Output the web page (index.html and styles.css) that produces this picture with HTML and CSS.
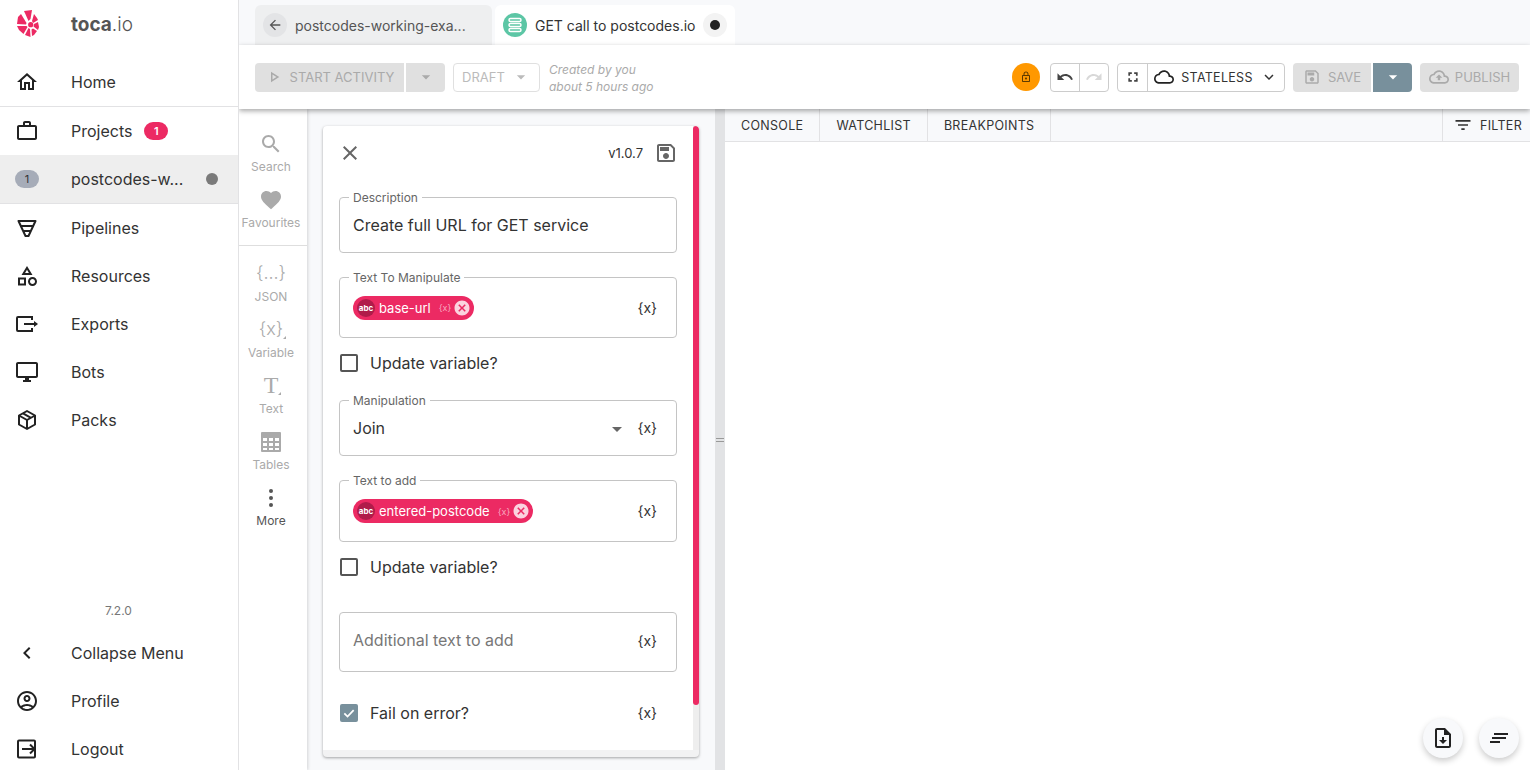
FILE: index.html
```html
<!DOCTYPE html>
<html lang="en">
<head>
    <meta charset="UTF-8">
    <title>toca.io</title>
    <link rel="stylesheet" href="styles.css">
</head>
<body>
    <div class="app">
        <aside class="sidebar">
            <div class="brand">
                <svg class="logo" width="22" height="27" viewBox="0 0 22 27" fill="#ec2a63">
                    <path d="M7 1 L15 0 L13.500 9 L11.500 11 Z"/>
                    <path d="M17 4 L20 8 L21 10 L16 13 L15 11 Z"/>
                    <path d="M21 12 L22 17 L21 20 L16.500 16.500 L17 14 Z"/>
                    <path d="M20 21 L17 25 L15 26 L14.500 19.500 L16 18.500 Z"/>
                    <path d="M13.500 27 L8 25 L11.500 18 L13 19 Z"/>
                    <path d="M6.500 24 L2 20 L0 16 L9.500 16 L10.500 17 Z"/>
                    <path d="M0 14 L1 7 L4 4 L9.500 13 L9 14.500 Z"/>
                    <circle cx="13.700" cy="14.700" r="2.600"/>
                </svg>
                <span class="brand-name"><b>toca</b>.io</span>
            </div>
            <nav class="nav">
                <a class="nav-item nav-home">
                    <svg class="nav-icon" viewBox="0 0 24 24"><path d="M12 5.690l5 4.500V18h-2v-6H9v6H7v-7.810l5-4.500M12 3L2 12h3v8h6v-6h2v6h6v-8h3L12 3z"/></svg>
                    <span>Home</span>
                </a>
                <a class="nav-item">
                    <svg class="nav-icon" viewBox="0 0 24 24"><path d="M14 6V4h-4v2h4zM4 8v11h16V8H4zm16-2c1.110 0 2 .890 2 2v11c0 1.110-.890 2-2 2H4c-1.110 0-2-.890-2-2l.010-11c0-1.110.880-2 1.990-2h4V4c0-1.110.890-2 2-2h4c1.110 0 2 .890 2 2v2h4z"/></svg>
                    <span>Projects</span>
                    <span class="count-badge">1</span>
                </a>
                <a class="nav-item nav-active">
                    <span class="grey-badge">1</span>
                    <span>postcodes-w...</span>
                    <span class="status-dot"></span>
                </a>
                <a class="nav-item">
                    <svg class="nav-icon nav-stroke" viewBox="0 0 24 24"><path d="M3.500 5h17L13.500 20h-3z" stroke-linejoin="round"/><path d="M5 10h14M8 15h8"/></svg>
                    <span>Pipelines</span>
                </a>
                <a class="nav-item">
                    <svg class="nav-icon" viewBox="0 0 24 24"><path d="M12 2l-5.500 9h11L12 2zm0 3.840L13.930 9h-3.870L12 5.840zM17.500 13c-2.490 0-4.500 2.010-4.500 4.500s2.010 4.500 4.500 4.500 4.500-2.010 4.500-4.500-2.010-4.500-4.500-4.500zm0 7c-1.380 0-2.500-1.120-2.500-2.500s1.120-2.500 2.500-2.500 2.500 1.120 2.500 2.500-1.120 2.500-2.500 2.500zM3 21.500h8v-8H3v8zm2-6h4v4H5v-4z"/></svg>
                    <span>Resources</span>
                </a>
                <a class="nav-item">
                    <svg class="nav-icon nav-stroke" viewBox="0 0 24 24"><path d="M17 8V5H3a1 1 0 0 0-1 1v12a1 1 0 0 0 1 1h14v-3"/><path d="M9 12h11"/><path d="M19 9l4 3-4 3z" fill="#222" stroke="none"/></svg>
                    <span>Exports</span>
                </a>
                <a class="nav-item">
                    <svg class="nav-icon" viewBox="0 0 24 24"><path d="M21 2H3c-1.100 0-2 .900-2 2v12c0 1.100.900 2 2 2h7v2H8v2h8v-2h-2v-2h7c1.100 0 2-.900 2-2V4c0-1.100-.900-2-2-2zm0 14H3V4h18v12z"/></svg>
                    <span>Bots</span>
                </a>
                <a class="nav-item">
                    <svg class="nav-icon nav-stroke" viewBox="0 0 24 24" stroke-linejoin="round"><path d="M12 3l8 4.500v9L12 21l-8-4.500v-9z"/><path d="M4 7.500l8 4.500 8-4.500M12 12v9M8 5.300l8 4.500"/></svg>
                    <span>Packs</span>
                </a>
            </nav>
            <div class="sidebar-foot">
                <div class="version">7.2.0</div>
                <a class="nav-item">
                    <svg class="nav-icon" viewBox="0 0 24 24"><path d="M15.410 7.410L14 6l-6 6 6 6 1.410-1.410L10.830 12z"/></svg>
                    <span>Collapse Menu</span>
                </a>
                <a class="nav-item">
                    <svg class="nav-icon" viewBox="0 0 24 24"><path d="M12 2C6.480 2 2 6.480 2 12s4.480 10 10 10 10-4.480 10-10S17.520 2 12 2zM7.350 18.500C8.660 17.560 10.260 17 12 17s3.340.560 4.650 1.500C15.340 19.440 13.740 20 12 20s-3.340-.560-4.650-1.500zm10.790-1.380C16.450 15.800 14.320 15 12 15s-4.450.800-6.140 2.120C4.700 15.730 4 13.950 4 12c0-4.420 3.580-8 8-8s8 3.580 8 8c0 1.950-.700 3.730-1.860 5.120zM12 6c-1.930 0-3.500 1.570-3.500 3.500S10.070 13 12 13s3.500-1.570 3.500-3.500S13.930 6 12 6zm0 5c-.830 0-1.500-.670-1.500-1.500S11.170 8 12 8s1.500.670 1.500 1.500S12.830 11 12 11z"/></svg>
                    <span>Profile</span>
                </a>
                <a class="nav-item">
                    <svg class="nav-icon nav-stroke" viewBox="0 0 24 24"><path d="M4 3.500h15a1 1 0 0 1 1 1v15a1 1 0 0 1-1 1H4a1 1 0 0 1-1-1v-15a1 1 0 0 1 1-1z"/><path d="M7 12h13M15 7.500l4.500 4.500-4.500 4.500"/></svg>
                    <span>Logout</span>
                </a>
            </div>
        </aside>

        <main class="main">
            <div class="tabs">
                <div class="tab tab-back">
                    <span class="tab-circle">
                        <svg width="16" height="16" viewBox="0 0 24 24" fill="#555"><path d="M20 11H7.830l5.590-5.590L12 4l-8 8 8 8 1.410-1.410L7.830 13H20v-2z"/></svg>
                    </span>
                    <span>postcodes-working-exa...</span>
                </div>
                <div class="tab tab-current">
                    <span class="tab-circle tab-green">
                        <svg width="18" height="18" viewBox="0 0 18 18" fill="none" stroke="#fff" stroke-width="1.500"><rect x="3" y="2.500" width="12" height="3" rx="1.500"/><rect x="3" y="7.500" width="12" height="3" rx="1.500"/><rect x="3" y="12.500" width="12" height="3" rx="1.500"/></svg>
                    </span>
                    <span>GET call to postcodes.io</span>
                    <span class="tab-circle tab-dot"><i></i></span>
                </div>
            </div>

            <div class="toolbar">
                <div class="btn btn-disabled btn-start">
                    <svg width="18" height="18" viewBox="0 0 24 24" fill="#aaa"><path d="M10 8.640L15.270 12 10 15.360V8.640M8 5v14l11-7L8 5z"/></svg>
                    START ACTIVITY
                </div>
                <div class="btn btn-disabled btn-start-drop">
                    <svg width="20" height="20" viewBox="0 0 24 24" fill="#aaa"><path d="M7 10l5 5 5-5z"/></svg>
                </div>
                <div class="btn btn-draft">
                    DRAFT
                    <svg width="20" height="20" viewBox="0 0 24 24" fill="#bbb"><path d="M7 10l5 5 5-5z"/></svg>
                </div>
                <div class="created">Created by you<br>about 5 hours ago</div>

                <div class="toolbar-right">
                    <span class="lock">
                        <svg width="12" height="12" viewBox="0 0 24 24" fill="#5d3a00"><path d="M18 8h-1V6c0-2.760-2.240-5-5-5S7 3.240 7 6v2H6c-1.100 0-2 .900-2 2v10c0 1.100.900 2 2 2h12c1.100 0 2-.900 2-2V10c0-1.100-.900-2-2-2zM9 6c0-1.660 1.340-3 3-3s3 1.340 3 3v2H9V6zm9 14H6V10h12v10zm-6-3c1.100 0 2-.900 2-2s-.900-2-2-2-2 .900-2 2 .900 2 2 2z"/></svg>
                    </span>
                    <div class="btn-group">
                        <span class="group-cell group-undo">
                            <svg width="18" height="18" viewBox="0 0 24 24" fill="#444"><path d="M12.500 8c-2.650 0-5.050.990-6.900 2.600L2 7v9h9l-3.620-3.620c1.390-1.160 3.160-1.880 5.120-1.880 3.540 0 6.550 2.310 7.600 5.500l2.370-.780C21.080 11.030 17.150 8 12.500 8z"/></svg>
                        </span>
                        <span class="group-cell">
                            <svg width="18" height="18" viewBox="0 0 24 24" fill="#d8d8d8"><path d="M18.400 10.600C16.550 8.990 14.150 8 11.500 8c-4.650 0-8.580 3.030-9.960 7.220L3.900 16c1.050-3.190 4.050-5.500 7.600-5.500 1.950 0 3.730.720 5.120 1.880L13 16h9V7l-3.600 3.600z"/></svg>
                        </span>
                    </div>
                    <div class="btn-group">
                        <span class="group-cell">
                            <svg width="14" height="14" viewBox="0 0 24 24" fill="#444"><path d="M7 14H4v6h6v-3H7v-3zm-3-4h3V7h3V4H4v6zm13 7h-3v3h6v-6h-3v3zM14 4v3h3v3h3V4h-6z"/></svg>
                        </span>
                        <span class="group-cell group-wide">
                            <svg width="20" height="20" viewBox="0 0 24 24" fill="#222"><path d="M19.350 10.040C18.670 6.590 15.640 4 12 4 9.110 4 6.600 5.640 5.350 8.040 2.340 8.360 0 10.910 0 14c0 3.310 2.690 6 6 6h13c2.760 0 5-2.240 5-5 0-2.640-2.050-4.780-4.650-4.960zM19 18H6c-2.210 0-4-1.790-4-4s1.790-4 4-4h.710C7.370 7.690 9.480 6 12 6c3.040 0 5.500 2.460 5.500 5.500v.500H19c1.660 0 3 1.340 3 3s-1.340 3-3 3z"/></svg>
                            STATELESS
                            <svg width="18" height="18" viewBox="0 0 24 24" fill="#333"><path d="M16.590 8.590L12 13.170 7.410 8.590 6 10l6 6 6-6z"/></svg>
                        </span>
                    </div>
                    <div class="save-group">
                        <div class="btn btn-disabled btn-save">
                            <svg width="18" height="18" viewBox="0 0 24 24" fill="#aaa"><path d="M17 3H5c-1.110 0-2 .900-2 2v14c0 1.100.890 2 2 2h14c1.100 0 2-.900 2-2V7l-4-4zm2 16H5V5h11.170L19 7.830V19zm-7-7c-1.660 0-3 1.340-3 3s1.340 3 3 3 3-1.340 3-3-1.340-3-3-3zM6 6h9v4H6z"/></svg>
                            SAVE
                        </div>
                        <div class="btn btn-save-drop">
                            <svg width="20" height="20" viewBox="0 0 24 24" fill="#fff"><path d="M7 10l5 5 5-5z"/></svg>
                        </div>
                    </div>
                    <div class="btn btn-disabled btn-publish">
                        <svg width="20" height="20" viewBox="0 0 24 24" fill="#aaa"><path d="M19.350 10.040C18.670 6.590 15.640 4 12 4 9.110 4 6.600 5.640 5.350 8.040 2.340 8.360 0 10.910 0 14c0 3.310 2.690 6 6 6h13c2.760 0 5-2.240 5-5 0-2.640-2.050-4.780-4.650-4.960zM19 18H6c-2.210 0-4-1.790-4-4s1.790-4 4-4h.710C7.370 7.690 9.480 6 12 6c3.040 0 5.500 2.460 5.500 5.500v.500H19c1.660 0 3 1.340 3 3s-1.340 3-3 3zM8 13h2.550v3h2.900v-3H16l-4-4z"/></svg>
                        PUBLISH
                    </div>
                </div>
            </div>

            <div class="workspace">
                <div class="palette">
                    <div class="palette-item">
                        <svg width="24" height="24" viewBox="0 0 24 24" fill="#aaa"><path d="M15.500 14h-.790l-.280-.270C15.410 12.590 16 11.110 16 9.500 16 5.910 13.090 3 9.500 3S3 5.910 3 9.500 5.910 16 9.500 16c1.610 0 3.090-.590 4.230-1.570l.270.280v.790l5 4.990L20.490 19l-4.990-5zm-6 0C7.010 14 5 11.990 5 9.500S7.010 5 9.500 5 14 7.010 14 9.500 11.990 14 9.500 14z"/></svg>
                        <span>Search</span>
                    </div>
                    <div class="palette-item">
                        <svg width="24" height="24" viewBox="0 0 24 24" fill="#aaa"><path d="M12 21.350l-1.450-1.320C5.400 15.360 2 12.280 2 8.500 2 5.420 4.420 3 7.500 3c1.740 0 3.410.810 4.500 2.090C13.090 3.810 14.760 3 16.500 3 19.580 3 22 5.420 22 8.500c0 3.780-3.400 6.860-8.550 11.540L12 21.350z"/></svg>
                        <span>Favourites</span>
                    </div>
                    <div class="palette-sep"></div>
                    <div class="palette-item">
                        <b class="palette-glyph">{...}</b>
                        <span>JSON</span>
                    </div>
                    <div class="palette-item">
                        <b class="palette-glyph palette-corner">{x}</b>
                        <span>Variable</span>
                    </div>
                    <div class="palette-item">
                        <b class="palette-glyph palette-t palette-corner">T</b>
                        <span>Text</span>
                    </div>
                    <div class="palette-item">
                        <svg width="24" height="24" viewBox="0 0 24 24" fill="#aaa"><path fill-rule="evenodd" d="M3 2h18a1 1 0 0 1 1 1v18a1 1 0 0 1-1 1H3a1 1 0 0 1-1-1V3a1 1 0 0 1 1-1zM4 8v3h4V8zm6 0v3h4V8zm6 0v3h4V8zM4 13v3h4v-3zm6 0v3h4v-3zm6 0v3h4v-3zM4 18v2h4v-2zm6 0v2h4v-2zm6 0v2h4v-2z"/></svg>
                        <span>Tables</span>
                    </div>
                    <div class="palette-item palette-more">
                        <svg width="24" height="24" viewBox="0 0 24 24" fill="#555"><circle cx="12" cy="5" r="2"/><circle cx="12" cy="12" r="2"/><circle cx="12" cy="19" r="2"/></svg>
                        <span>More</span>
                    </div>
                </div>

                <div class="editor">
                    <div class="card">
                        <div class="card-body">
                            <div class="card-head">
                                <svg class="card-close" width="24" height="24" viewBox="0 0 24 24" fill="#666"><path d="M19 6.410L17.590 5 12 10.590 6.410 5 5 6.410 10.590 12 5 17.590 6.410 19 12 13.410 17.590 19 19 17.590 13.410 12z"/></svg>
                                <span class="card-version">v1.0.7</span>
                                <svg width="24" height="24" viewBox="0 0 24 24" fill="#666"><path d="M17 3H5c-1.110 0-2 .900-2 2v14c0 1.100.890 2 2 2h14c1.100 0 2-.900 2-2V7l-4-4zm2 16H5V5h11.170L19 7.830V19zm-7-7c-1.660 0-3 1.340-3 3s1.340 3 3 3 3-1.340 3-3-1.340-3-3-3zM6 6h9v4H6z"/></svg>
                            </div>

                            <fieldset class="field field-description">
                                <legend>Description</legend>
                                <span class="field-value">Create full URL for GET service</span>
                            </fieldset>

                            <fieldset class="field field-manipulate">
                                <legend>Text To Manipulate</legend>
                                <span class="chip">
                                    <span class="chip-avatar">abc</span>
                                    <span>base-url</span>
                                    <span class="chip-x">{x}</span>
                                    <svg width="18" height="18" viewBox="0 0 24 24" fill="#fbd3df"><path d="M12 2C6.470 2 2 6.470 2 12s4.470 10 10 10 10-4.470 10-10S17.530 2 12 2zm5 13.590L15.590 17 12 13.410 8.410 17 7 15.590 10.590 12 7 8.410 8.410 7 12 10.590 15.590 7 17 8.410 13.410 12 17 15.590z"/></svg>
                                </span>
                                <span class="var-toggle">{x}</span>
                            </fieldset>

                            <div class="check-row">
                                <span class="checkbox"></span>
                                <span>Update variable?</span>
                            </div>

                            <fieldset class="field field-select">
                                <legend>Manipulation</legend>
                                <span class="field-value">Join</span>
                                <svg class="select-arrow" width="24" height="24" viewBox="0 0 24 24" fill="#666"><path d="M7 10l5 5 5-5z"/></svg>
                                <span class="var-toggle">{x}</span>
                            </fieldset>

                            <fieldset class="field field-add">
                                <legend>Text to add</legend>
                                <span class="chip">
                                    <span class="chip-avatar">abc</span>
                                    <span>entered-postcode</span>
                                    <span class="chip-x">{x}</span>
                                    <svg width="18" height="18" viewBox="0 0 24 24" fill="#fbd3df"><path d="M12 2C6.470 2 2 6.470 2 12s4.470 10 10 10 10-4.470 10-10S17.530 2 12 2zm5 13.590L15.590 17 12 13.410 8.410 17 7 15.590 10.590 12 7 8.410 8.410 7 12 10.590 15.590 7 17 8.410 13.410 12 17 15.590z"/></svg>
                                </span>
                                <span class="var-toggle">{x}</span>
                            </fieldset>

                            <div class="check-row">
                                <span class="checkbox"></span>
                                <span>Update variable?</span>
                            </div>

                            <div class="field field-plain">
                                <span class="field-placeholder">Additional text to add</span>
                                <span class="var-toggle">{x}</span>
                            </div>

                            <div class="check-row check-fail">
                                <span class="checkbox checkbox-on">
                                    <svg width="14" height="14" viewBox="0 0 24 24" fill="none" stroke="#fff" stroke-width="3"><path d="M4 12.500l5.500 5.500L20 7"/></svg>
                                </span>
                                <span>Fail on error?</span>
                                <span class="var-toggle">{x}</span>
                            </div>
                        </div>
                        <div class="card-scroll"><div class="card-thumb"></div></div>
                    </div>
                </div>

                <div class="divider"><i></i><i></i></div>

                <div class="console">
                    <div class="console-tabs">
                        <span class="console-tab">CONSOLE</span>
                        <span class="console-tab">WATCHLIST</span>
                        <span class="console-tab">BREAKPOINTS</span>
                        <span class="console-filter">
                            <svg width="20" height="20" viewBox="0 0 24 24" fill="#333"><path d="M10 18h4v-2h-4v2zM3 6v2h18V6H3zm3 7h12v-2H6v2z"/></svg>
                            FILTER
                        </span>
                    </div>
                    <div class="console-body">
                        <span class="fab">
                            <svg width="24" height="24" viewBox="0 0 24 24" fill="#222"><path d="M14 2H6c-1.100 0-2 .900-2 2v16c0 1.100.900 2 2 2h12c1.100 0 2-.900 2-2V8l-6-6zm4 18H6V4h7v5h5v11z"/><path d="M11 11h2v3h3l-4 4-4-4h3z"/></svg>
                        </span>
                        <span class="fab">
                            <svg width="24" height="24" viewBox="0 0 24 24" fill="none" stroke="#222" stroke-width="2"><path d="M7 8h14M5 12h14M3 16h10"/></svg>
                        </span>
                    </div>
                </div>
            </div>
        </main>
    </div>
</body>
</html>
```

FILE: styles.css
```css
* {
    box-sizing: border-box;
}

html, body {
    height: 100%;
}

body {
    margin: 0;
    overflow: hidden;
    font-family: Inter, "Liberation Sans", sans-serif;
    color: #333;
    background: #fff;
}

.app {
    display: flex;
    height: 770px;
}

/* sidebar */

.sidebar {
    position: relative;
    z-index: 3;
    width: 239px;
    flex: none;
    display: flex;
    flex-direction: column;
    background: #fff;
    border-right: 1px solid #e2e2e4;
}

.brand {
    height: 58px;
    display: flex;
    align-items: flex-start;
    padding: 10px 0 0 17px;
    gap: 32px;
}

.brand-name {
    font-size: 19px;
    line-height: 30px;
    color: #555;
    font-weight: 300;
}

.brand-name b {
    font-weight: 700;
}

.nav-item {
    height: 48px;
    display: flex;
    align-items: center;
    font-size: 16px;
    color: #333;
}

.nav-icon {
    width: 24px;
    height: 24px;
    margin: 0 32px 0 15px;
    flex: none;
    fill: #222;
}

.nav-stroke {
    fill: none;
    stroke: #222;
    stroke-width: 2;
}

.nav-home {
    height: 49px;
    border-bottom: 1px solid #e2e2e4;
}

.nav-active {
    height: 49px;
    background: #eee;
    border-bottom: 1px solid #e2e2e4;
}

.count-badge {
    width: 24px;
    height: 18px;
    margin-left: 12px;
    border-radius: 9px;
    background: #ec2a63;
    color: #fff;
    font-size: 11px;
    font-weight: 600;
    line-height: 18px;
    text-align: center;
}

.grey-badge {
    width: 24px;
    height: 18px;
    margin: 0 32px 0 15px;
    border-radius: 9px;
    background: #a6acb8;
    color: #333;
    font-size: 11px;
    line-height: 18px;
    text-align: center;
}

.status-dot {
    width: 12px;
    height: 12px;
    margin-left: auto;
    margin-right: 20px;
    border-radius: 50%;
    background: #7a7a7a;
}

.sidebar-foot {
    margin-top: auto;
    margin-bottom: -3px;
}

.version {
    height: 19px;
    padding-right: 1px;
    margin-bottom: 7px;
    text-align: center;
    font-size: 12px;
    color: #777;
}

/* main column */

.main {
    flex: 1;
    min-width: 0;
    display: flex;
    flex-direction: column;
    background: #f8f9fb;
}

.tabs {
    height: 45px;
    flex: none;
    display: flex;
    align-items: flex-end;
    gap: 3px;
    padding-left: 16px;
}

.tab {
    height: 40px;
    display: flex;
    align-items: center;
    gap: 8px;
    padding: 0 8px;
    border-radius: 6px 6px 0 0;
    font-size: 14px;
    white-space: nowrap;
}

.tab-back {
    width: 237px;
    background: #eeeff0;
    color: #555;
}

.tab-current {
    width: 240px;
    background: #fff;
    color: #333;
}

.tab-circle {
    width: 24px;
    height: 24px;
    flex: none;
    display: flex;
    align-items: center;
    justify-content: center;
    border-radius: 50%;
    background: #e3e4e6;
}

.tab-green {
    background: #5cc6a5;
}

.tab-dot {
    margin-left: auto;
    background: #f3f3f3;
}

.tab-dot i {
    width: 10px;
    height: 10px;
    border-radius: 50%;
    background: #222;
}

/* toolbar */

.toolbar {
    position: relative;
    z-index: 2;
    height: 64px;
    flex: none;
    display: flex;
    align-items: center;
    padding: 0 11px 0 16px;
    background: #fff;
    box-shadow: 0 2px 5px rgba(0, 0, 0, .35);
}

.btn {
    height: 29px;
    display: flex;
    align-items: center;
    justify-content: center;
    gap: 7px;
    border-radius: 4px;
    font-size: 13px;
}

.btn-disabled {
    background: #e0e0e0;
    color: #aaa;
}

.btn-start {
    width: 149px;
    border-radius: 4px 0 0 4px;
}

.btn-start-drop {
    width: 39px;
    margin-left: 2px;
    border-radius: 0 4px 4px 0;
}

.btn-draft {
    width: 87px;
    margin-left: 8px;
    gap: 6px;
    border: 1px solid #e0e0e0;
    color: #bbb;
}

.created {
    margin-left: 9px;
    padding-top: 1px;
    font-size: 12px;
    line-height: 17px;
    font-style: italic;
    color: #aaa;
}

.toolbar-right {
    margin-left: auto;
    display: flex;
    align-items: center;
    gap: 8px;
}

.lock {
    width: 28px;
    height: 28px;
    margin-right: 2px;
    display: flex;
    align-items: center;
    justify-content: center;
    border-radius: 50%;
    background: #ff9800;
}

.btn-group {
    height: 29px;
    display: flex;
    border: 1px solid #ccc;
    border-radius: 4px;
}

.group-cell {
    width: 29px;
    display: flex;
    align-items: center;
    justify-content: center;
}

.group-undo {
    width: 28px;
}

.group-cell + .group-cell {
    border-left: 1px solid #ccc;
}

.group-wide {
    width: 137px;
    gap: 7px;
    font-size: 12.500px;
    letter-spacing: .3px;
    color: #333;
}

.save-group {
    display: flex;
    gap: 2px;
}

.btn-save {
    width: 78px;
    border-radius: 4px 0 0 4px;
}

.btn-save-drop {
    width: 39px;
    border-radius: 0 4px 4px 0;
    background: #78909c;
}

.btn-publish {
    width: 99px;
    gap: 6px;
}

/* workspace */

.workspace {
    flex: 1;
    min-height: 0;
    display: flex;
}

.palette {
    width: 68px;
    flex: none;
    display: flex;
    flex-direction: column;
    padding-top: 12px;
    background: #fff;
    box-shadow: 1px 0 3px rgba(0, 0, 0, .15);
}

.palette-item {
    height: 56px;
    flex: none;
    display: flex;
    flex-direction: column;
    align-items: center;
    padding: 16px 4px 0 0;
    font-size: 12px;
    color: #aaa;
}

.palette-item span {
    margin-top: 2px;
    line-height: 16px;
}

.palette-item svg, .palette-glyph {
    height: 24px;
    margin-top: -5px;
    margin-bottom: 1px;
    flex: none;
}

.palette-glyph {
    position: relative;
    margin-top: -6px;
    margin-bottom: 2px;
    font-weight: 300;
    font-size: 18px;
    line-height: 24px;
    color: #aaa;
}

.palette-corner::after {
    content: "";
    position: absolute;
    right: -3px;
    bottom: 2px;
    border-left: 3px solid transparent;
    border-bottom: 3px solid #aaa;
}

.palette-t {
    font-family: "Liberation Serif", serif;
    font-size: 24px;
}

.palette-sep {
    height: 1px;
    flex: none;
    margin: 12px 0 5px;
    background: #dedede;
}

.palette-more {
    color: #555;
}

.editor {
    width: 408px;
    flex: none;
    padding: 17px 16px 0;
}

.card {
    height: 631px;
    display: flex;
    background: #fff;
    border-bottom: 7px solid #f2f2f3;
    border-radius: 4px;
    box-shadow: 0 1px 3px rgba(0, 0, 0, .35);
    overflow: hidden;
}

.card-body {
    flex: 1;
    min-width: 0;
    padding: 0 16px;
}

.card-scroll {
    width: 6px;
    flex: none;
    background: #eee;
}

.card-thumb {
    height: 579px;
    border-radius: 3px;
    background: #ec2a63;
}

.card-head {
    height: 54px;
    display: flex;
    align-items: center;
    font-size: 13px;
    color: #333;
}

.card-close {
    margin-left: -1px;
}

.card-version {
    margin-left: auto;
    margin-right: 11px;
}

.card-head svg:last-child {
    margin-right: -1px;
}

.field {
    position: relative;
    min-width: 0;
    width: 338px;
    margin: 0;
    padding: 0 13px;
    display: flex;
    align-items: center;
    border: 1px solid #c4c4c4;
    border-radius: 4px;
    font-size: 16px;
    color: #333;
}

fieldset.field {
    padding-bottom: 6px;
}

.field legend {
    height: 14px;
    margin-left: -4px;
    padding: 0 4px;
    font-size: 12px;
    line-height: 16px;
    color: #666;
}

.field-description {
    height: 63px;
    margin-top: 10px;
}

.field-manipulate {
    height: 68px;
    margin-top: 17px;
}

.field-select {
    height: 63px;
    margin-top: 5px;
}

.field-add {
    height: 69px;
    margin-top: 17px;
}

.field-plain {
    height: 60px;
    margin-top: 20px;
}

.field-placeholder {
    color: #777;
    margin-top: -5px;
}

.select-arrow {
    position: absolute;
    right: 47px;
    top: 10px;
}

.var-toggle {
    position: absolute;
    right: 20px;
    top: 50%;
    font-size: 14px;
    line-height: 20px;
    margin-top: -10px;
    color: #333;
}

.field .var-toggle {
    right: 19px;
}

fieldset .var-toggle {
    margin-top: -13px;
}

.field-plain .var-toggle {
    margin-top: -11px;
}

.chip {
    height: 24px;
    display: inline-flex;
    align-items: center;
    padding: 0 3px 0 4px;
    border-radius: 12px;
    background: #ec2a63;
    color: #fff;
    font-size: 13px;
}

.chip-avatar {
    width: 18px;
    height: 18px;
    margin-right: 4px;
    border-radius: 50%;
    background: #b01c4a;
    color: #fff;
    font-size: 8px;
    font-weight: 700;
    line-height: 18px;
    text-align: center;
}

.chip-x {
    margin: 0 2px 0 8px;
    font-size: 9px;
    color: #f8a6bf;
}

.check-row {
    position: relative;
    height: 50px;
    display: flex;
    align-items: center;
    gap: 12px;
    font-size: 16px;
    color: #333;
}

.check-fail {
    height: 24px;
    margin-top: 29px;
}

.checkbox {
    width: 18px;
    height: 18px;
    margin-left: 1px;
    display: flex;
    align-items: center;
    justify-content: center;
    border: 2px solid #555;
    border-radius: 2px;
}

.checkbox-on {
    border: 0;
    background: #78909c;
}

.divider {
    width: 10px;
    flex: none;
    display: flex;
    flex-direction: column;
    align-items: center;
    justify-content: center;
    gap: 2px;
    background: #e2e3e5;
}

.divider i {
    width: 8px;
    height: 1px;
    background: #999;
}

.console {
    flex: 1;
    min-width: 0;
    display: flex;
    flex-direction: column;
    background: #fff;
}

.console-tabs {
    height: 33px;
    flex: none;
    display: flex;
    background: #f8f9fb;
    border-bottom: 1px solid #e2e2e4;
    font-size: 12.500px;
    letter-spacing: .3px;
    color: #333;
}

.console-tab {
    display: flex;
    align-items: center;
    padding: 0 16px;
    border-right: 1px solid #e2e2e4;
}

.console-filter {
    margin-left: auto;
    width: 88px;
    display: flex;
    align-items: center;
    gap: 7px;
    padding-left: 10px;
    border-left: 1px solid #e2e2e4;
}

.console-body {
    flex: 1;
    display: flex;
    justify-content: flex-end;
    align-items: flex-end;
    gap: 16px;
    padding: 0 11px 12px 0;
}

.fab {
    width: 40px;
    height: 40px;
    display: flex;
    align-items: center;
    justify-content: center;
    border-radius: 50%;
    background: #f8f9fb;
    box-shadow: 0 3px 6px rgba(0, 0, 0, .2);
}
```
